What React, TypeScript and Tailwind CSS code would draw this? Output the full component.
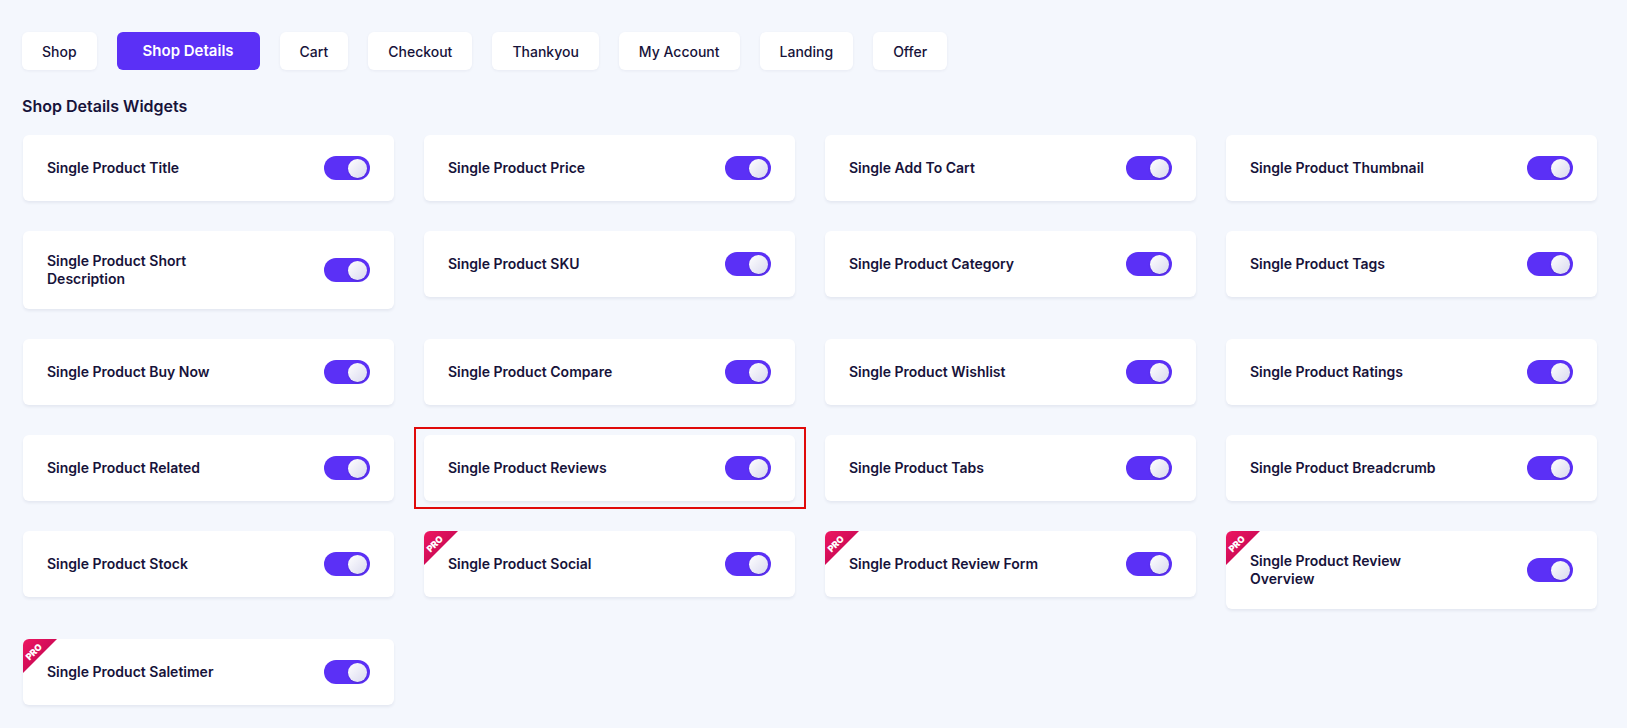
import React, { useState } from "react";

const tabs = ["Shop", "Shop Details", "Cart", "Checkout", "Thankyou", "My Account", "Landing", "Offer"];

const widgets = [
  { name: "Single Product Title" },
  { name: "Single Product Price" },
  { name: "Single Add To Cart" },
  { name: "Single Product Thumbnail" },
  { name: "Single Product Short Description" },
  { name: "Single Product SKU" },
  { name: "Single Product Category" },
  { name: "Single Product Tags" },
  { name: "Single Product Buy Now" },
  { name: "Single Product Compare" },
  { name: "Single Product Wishlist" },
  { name: "Single Product Ratings" },
  { name: "Single Product Related" },
  { name: "Single Product Reviews", marked: true },
  { name: "Single Product Tabs" },
  { name: "Single Product Breadcrumb" },
  { name: "Single Product Stock" },
  { name: "Single Product Social", pro: true },
  { name: "Single Product Review Form", pro: true },
  { name: "Single Product Review Overview", pro: true },
  { name: "Single Product Saletimer", pro: true },
];

const Toggle: React.FC<{ on: boolean; onClick: () => void }> = ({ on, onClick }) => (
  <button
    onClick={onClick}
    className={`relative shrink-0 w-[46px] h-[24px] rounded-full ${on ? "bg-[#5b30f6]" : "bg-[#d5d8e3]"}`}
  >
    <span
      className={`absolute top-[2.5px] w-[19px] h-[19px] rounded-full bg-gradient-to-br from-white to-[#d9d9ee] shadow-[0_1px_2px_rgba(0,0,0,0.15)] ${
        on ? "right-[3px]" : "left-[3px]"
      }`}
    />
  </button>
);

const ProBadge: React.FC = () => (
  <div className="absolute top-0 left-0 w-[34px] h-[34px] [clip-path:polygon(0_0,100%_0,0_100%)] bg-gradient-to-br from-[#ee1762] to-[#b6004c]">
    <span className="absolute left-[-2px] top-[8px] w-[26px] text-center text-[9px] leading-[10px] font-black text-white -rotate-45">
      PRO
    </span>
  </div>
);

export default function App() {
  const [active, setActive] = useState("Shop Details");
  const [enabled, setEnabled] = useState<Record<string, boolean>>(
    Object.fromEntries(widgets.map((w) => [w.name, true]))
  );

  return (
    <div className="min-h-screen bg-[#f4f7fd] text-[#17133a]" style={{ fontFamily: "Inter, 'Noto Sans', sans-serif" }}>
      <div className="pt-[32px] pl-[22px]">
        <div className="flex gap-[20px]">
          {tabs.map((t) =>
            t === active ? (
              <button
                key={t}
                onClick={() => setActive(t)}
                className="h-[38px] px-[26px] rounded-[6px] bg-[#5b30f6] text-white text-[15px] font-semibold"
              >
                {t}
              </button>
            ) : (
              <button
                key={t}
                onClick={() => setActive(t)}
                className="h-[38px] px-[20px] rounded-[6px] bg-white text-[14px] font-medium shadow-[0_1px_3px_rgba(30,40,90,0.06)]"
              >
                {t}
              </button>
            )
          )}
        </div>

        <h2 className="mt-[24px] mb-[17px] text-[16px] leading-[24px] font-semibold">{active} Widgets</h2>

        <div className="grid grid-cols-[repeat(4,371px)] gap-[30px] items-start pl-[1px]">
          {widgets.map((w) => (
            <div key={w.name} className="relative">
              <div className="relative overflow-hidden flex items-center justify-between py-[21px] px-[24px] bg-white rounded-[6px] shadow-[0_2px_3px_rgba(30,40,90,0.07)]">
                {w.pro && <ProBadge />}
                <span className="max-w-[200px] text-[14px] leading-[18px] font-semibold">{w.name}</span>
                <Toggle
                  on={enabled[w.name]}
                  onClick={() => setEnabled((s) => ({ ...s, [w.name]: !s[w.name] }))}
                />
              </div>
              {w.marked && (
                <div className="absolute -left-[10px] -right-[11px] -top-[8px] -bottom-[8px] border-2 border-[#e00a0a] pointer-events-none" />
              )}
            </div>
          ))}
        </div>
      </div>
    </div>
  );
}
